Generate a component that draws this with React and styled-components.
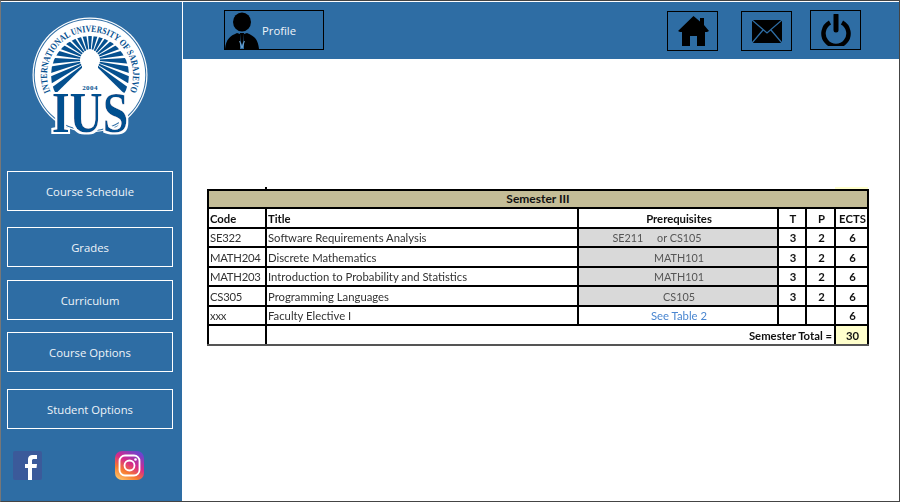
import React from 'react';
import styled, { createGlobalStyle } from 'styled-components';

const BLUE = '#2e6da4';

const GlobalStyle = createGlobalStyle`
  html, body {
    margin: 0;
    padding: 0;
    background: #fff;
  }
`;

const Frame = styled.div`
  width: 900px;
  height: 502px;
  box-sizing: border-box;
  border: 1px solid #444;
  border-left-color: #777;
  padding-top: 1px;
  background: #fff;
  display: flex;
  overflow: hidden;
  font-family: "Open Sans", "Noto Sans", sans-serif;
`;

const Sidebar = styled.aside`
  width: 181px;
  height: 499px;
  flex: none;
  background: ${BLUE};
  display: flex;
  flex-direction: column;
  align-items: flex-start;
`;

const LogoWrap = styled.div`
  width: 120px;
  height: 130px;
  margin: 13px 0 0 29px;
`;

const NavButton = styled.button`
  width: 166px;
  height: 40px;
  margin: ${(p) => p.$top}px 0 0 6px;
  box-sizing: border-box;
  background: transparent;
  border: 1px solid #fff;
  color: #eef4f9;
  font-family: inherit;
  font-size: 11.3px;
  padding: 0;
`;

const Socials = styled.div`
  display: flex;
  gap: 73px;
  margin: 22px 0 0 12px;
`;

const Content = styled.main`
  flex: 1;
  margin-left: 1px;
  display: flex;
  flex-direction: column;
`;

const TopBar = styled.header`
  height: 57px;
  flex: none;
  background: ${BLUE};
  display: flex;
  align-items: flex-start;
  padding: 8px 0 0 41px;
  box-sizing: border-box;
`;

const ProfileButton = styled.button`
  width: 100px;
  height: 40px;
  box-sizing: border-box;
  background: transparent;
  border: 1px solid #000;
  padding: 0;
  display: flex;
  align-items: flex-end;
  color: #eef4f9;
  font-family: inherit;
  font-size: 11.3px;
  overflow: hidden;
`;

const ProfileLabel = styled.span`
  align-self: center;
  margin-left: 3px;
`;

const IconGroup = styled.div`
  margin-left: 343px;
  display: flex;
  align-items: flex-start;
`;

const IconButton = styled.button`
  width: 51px;
  height: 40px;
  box-sizing: border-box;
  background: transparent;
  border: 1px solid #000;
  padding: 0 0 0 ${(p) => p.$nudge || 0}px;
  margin: ${(p) => p.$top}px 0 0 ${(p) => p.$left}px;
  display: flex;
  align-items: center;
  justify-content: center;
`;

const TableArea = styled.section`
  padding: 128px 0 0 24px;
`;

const Sheet = styled.table`
  width: 661px;
  table-layout: fixed;
  border-collapse: collapse;
  font-family: "Lato", "Liberation Sans", sans-serif;
  font-size: 11.3px;
  color: #333;
  filter: blur(0.25px);
`;

const StubRow = styled.tr`
  height: 2px;
`;

const StubCell = styled.td`
  padding: 0;
  height: 2px;
  line-height: 0;
  font-size: 0;
  background: ${(p) => (p.$yellow ? '#ffffcc' : 'transparent')};
  border-left: ${(p) => (p.$tick ? '2px solid #000' : 'none')};
`;

const BandCell = styled.th`
  height: 16px;
  line-height: 16px;
  padding: 0;
  background: #c4bd97;
  border: 2px solid #000;
  color: #111;
  font-size: 12px;
  font-weight: 700;
  text-align: center;
`;

const Row = styled.tr`
  height: 19.5px;
`;

const Cell = styled.td`
  padding: 1px 0 0 ${(p) => (p.$center ? 2 : 1)}px;
  border: 2px solid #000;
  line-height: 15px;
  text-align: ${(p) => (p.$center ? 'center' : 'left')};
  font-weight: ${(p) => (p.$bold ? 700 : 400)};
  color: ${(p) => (p.$bold ? '#111' : '#333')};
  white-space: nowrap;
  overflow: hidden;
`;

const CodeCell = styled(Cell)`
  letter-spacing: -0.25px;
`;

const PrereqCell = styled(Cell)`
  background: ${(p) => (p.$link ? '#fff' : '#d9d9d9')};
  color: ${(p) => (p.$link ? '#4a86d0' : '#555')};
  font-size: ${(p) => (p.$link ? 11.3 : 10.8)}px;
  padding-right: ${(p) => (p.$shift ? 44 : 0)}px;
`;

const TotalLabel = styled(Cell)`
  text-align: right;
  padding-right: 2px;
  border-bottom-color: #555;
`;

const TotalEmpty = styled(Cell)`
  border-bottom-color: #555;
`;

const TotalValue = styled(Cell)`
  background: #ffffcc;
  border-bottom-color: #555;
`;

const rows = [
  { code: 'SE322', title: 'Software Requirements Analysis', pre: 'SE211\u00a0\u00a0\u00a0\u00a0\u00a0or CS105', t: 3, p: 2, ects: 6, shift: true },
  { code: 'MATH204', title: 'Discrete Mathematics', pre: 'MATH101', t: 3, p: 2, ects: 6 },
  { code: 'MATH203', title: 'Introduction to Probability and Statistics', pre: 'MATH101', t: 3, p: 2, ects: 6 },
  { code: 'CS305', title: 'Programming Languages', pre: 'CS105', t: 3, p: 2, ects: 6 },
  { code: 'xxx', title: 'Faculty Elective I', pre: 'See Table 2', t: '', p: '', ects: 6, link: true },
];

const navItems = [
  { label: 'Course Schedule', top: 26 },
  { label: 'Grades', top: 16 },
  { label: 'Curriculum', top: 13 },
  { label: 'Course Options', top: 12 },
  { label: 'Student Options', top: 17 },
];

// sunburst behind the lighthouse, in page coordinates of the logo
const rays = Array.from({ length: 21 }, (_, i) => {
  const angle = ((-90 - 130 + i * 13) * Math.PI) / 180;
  const half = 0.078;
  const cx = 90;
  const cy = 60;
  const pt = (r, a) => `${(cx + r * Math.cos(a)).toFixed(1)},${(cy + r * Math.sin(a)).toFixed(1)}`;
  return [pt(10, angle - half), pt(10, angle + half), pt(60, angle + half), pt(60, angle - half)].join(' ');
});

const Logo = () => (
  <svg width="120" height="130" viewBox="30 15 120 130">
    <defs>
      <path id="logoArc" d="M 50.4 91.6 A 43 43 0 1 1 129.6 91.6" />
      <clipPath id="logoDisc">
        <circle cx="90" cy="75" r="39" />
      </clipPath>
      <filter id="logoHalo" x="-10%" y="-10%" width="120%" height="120%">
        <feMorphology in="SourceAlpha" operator="dilate" radius="2.2" result="wide" />
        <feFlood floodColor="#fff" />
        <feComposite in2="wide" operator="in" result="halo" />
        <feMorphology in="SourceGraphic" operator="dilate" radius="0.4" result="bold" />
        <feMerge>
          <feMergeNode in="halo" />
          <feMergeNode in="bold" />
        </feMerge>
      </filter>
    </defs>
    <circle cx="90" cy="75" r="57.5" fill="#fff" />
    <circle cx="90" cy="75" r="56.3" fill={BLUE} />
    <circle cx="90" cy="75" r="55.3" fill="#fff" />
    <g clipPath="url(#logoDisc)">
      {rays.map((points) => (
        <polygon key={points} points={points} fill="#05508f" />
      ))}
    </g>
    <path d="M82 80 V58 A8 9 0 0 1 98 58 V80 H104 V94 H76 V80 Z" fill="#fff" />
    <text x="90" y="90" textAnchor="middle" fontFamily="Liberation Serif" fontWeight="700" fontSize="7" letterSpacing="0.4" fill="#05508f">2004</text>
    <text fontFamily="Liberation Serif" fontWeight="700" fontSize="9.5" fill="#05508f">
      <textPath href="#logoArc" textLength="169" lengthAdjust="spacingAndGlyphs">INTERNATIONAL UNIVERSITY OF SARAJEVO</textPath>
    </text>
    <g filter="url(#logoHalo)">
      <text
        transform="translate(90 132) scale(0.82 1)"
        textAnchor="middle"
        fontFamily="Liberation Serif"
        fontWeight="700"
        fontSize="56"
        fill="#05508f"
      >
        IUS
      </text>
    </g>
  </svg>
);

const Person = () => (
  <svg width="34" height="38" viewBox="0 0 34 38">
    <ellipse cx="17" cy="11" rx="9" ry="9.5" fill="#000" />
    <path d="M0 38 C1 28 5 25 12 22 L15 23 V38 Z M34 38 C33 28 29 25 22 22 L19 23 V38 Z" fill="#000" />
    <path d="M15 22 H19 L18.5 30 L17 34 L15.5 30 Z" fill="#000" />
    <path d="M14.5 30 L17 37 L19.5 30" stroke="#7fb0d8" strokeWidth="0.8" fill="none" />
  </svg>
);

const Home = () => (
  <svg width="31" height="30" viewBox="0 0 31 30">
    <path d="M15.5 0 L22 5.500 V2 H26 V9 L31 15 L29 16 H27 V30 H19 V20 H12 V30 H4 V16 H2 L0 15 Z" fill="#000" />
  </svg>
);

const Mail = () => (
  <svg width="30" height="23" viewBox="0 0 30 23">
    <rect width="30" height="23" fill="#000" />
    <path d="M0 0 L15 13 L30 0 M0 23 L11 10 M30 23 L19 10" stroke={BLUE} strokeWidth="1.300" fill="none" />
  </svg>
);

const Power = () => (
  <svg width="30" height="32" viewBox="0 0 30 32">
    <path d="M9 8.500 A12.500 12.500 0 1 0 21 8.500" stroke="#000" strokeWidth="4.500" fill="none" />
    <path d="M15 1 V16" stroke="#000" strokeWidth="5" strokeLinecap="round" fill="none" />
  </svg>
);

const Facebook = () => (
  <svg width="29" height="29" viewBox="0 0 29 29">
    <rect width="29" height="29" rx="2" fill="#3b5a9a" />
    <path d="M15 29 V17 H12 V13 H15 V9 C15 5 17 4 20 4 H24 V8 H21 C19.500 8 19 8.500 19 10 V13 H24 L23.500 17 H19 V29 Z" fill="#fff" />
  </svg>
);

const Instagram = () => (
  <svg width="29" height="29" viewBox="0 0 29 29">
    <defs>
      <linearGradient id="instaFill" x1="0.15" y1="1" x2="0.75" y2="0">
        <stop offset="0" stopColor="#fdc468" />
        <stop offset="0.3" stopColor="#f77a2f" />
        <stop offset="0.6" stopColor="#d6298b" />
        <stop offset="1" stopColor="#6a45d0" />
      </linearGradient>
    </defs>
    <rect width="29" height="29" rx="7" fill="url(#instaFill)" />
    <rect x="4.500" y="4.500" width="20" height="20" rx="5.500" fill="none" stroke="#fff" strokeWidth="1.800" />
    <circle cx="14.500" cy="14.500" r="5" fill="none" stroke="#fff" strokeWidth="1.800" />
    <circle cx="20.500" cy="8.500" r="1.300" fill="#fff" />
  </svg>
);

export default function App() {
  return (
    <Frame>
      <GlobalStyle />
      <Sidebar>
        <LogoWrap>
          <Logo />
        </LogoWrap>
        {navItems.map((item) => (
          <NavButton key={item.label} $top={item.top}>
            {item.label}
          </NavButton>
        ))}
        <Socials>
          <Facebook />
          <Instagram />
        </Socials>
      </Sidebar>
      <Content>
        <TopBar>
          <ProfileButton>
            <Person />
            <ProfileLabel>Profile</ProfileLabel>
          </ProfileButton>
          <IconGroup>
            <IconButton $top={1} $left={0} $nudge={2}>
              <Home />
            </IconButton>
            <IconButton $top={1} $left={23}>
              <Mail />
            </IconButton>
            <IconButton $top={0} $left={18}>
              <Power />
            </IconButton>
          </IconGroup>
        </TopBar>
        <TableArea>
          <Sheet>
            <colgroup>
              <col style={{ width: 58 }} />
              <col style={{ width: 312 }} />
              <col style={{ width: 200 }} />
              <col style={{ width: 28 }} />
              <col style={{ width: 29 }} />
              <col style={{ width: 33 }} />
            </colgroup>
            <thead>
              <StubRow>
                <StubCell />
                <StubCell $tick />
                <StubCell />
                <StubCell />
                <StubCell />
                <StubCell $yellow />
              </StubRow>
              <tr>
                <BandCell colSpan={6}>Semester III</BandCell>
              </tr>
            </thead>
            <tbody>
              <Row>
                <Cell $bold>Code</Cell>
                <Cell $bold>Title</Cell>
                <Cell $bold $center>Prerequisites</Cell>
                <Cell $bold $center>T</Cell>
                <Cell $bold $center>P</Cell>
                <Cell $bold $center>ECTS</Cell>
              </Row>
              {rows.map((r) => (
                <Row key={r.code}>
                  <CodeCell>{r.code}</CodeCell>
                  <Cell>{r.title}</Cell>
                  <PrereqCell $center $link={r.link} $shift={r.shift}>{r.pre}</PrereqCell>
                  <Cell $center $bold>{r.t}</Cell>
                  <Cell $center $bold>{r.p}</Cell>
                  <Cell $center $bold>{r.ects}</Cell>
                </Row>
              ))}
              <Row>
                <TotalEmpty />
                <TotalLabel $bold colSpan={4}>Semester Total =</TotalLabel>
                <TotalValue $bold $center>30</TotalValue>
              </Row>
            </tbody>
          </Sheet>
        </TableArea>
      </Content>
    </Frame>
  );
}
